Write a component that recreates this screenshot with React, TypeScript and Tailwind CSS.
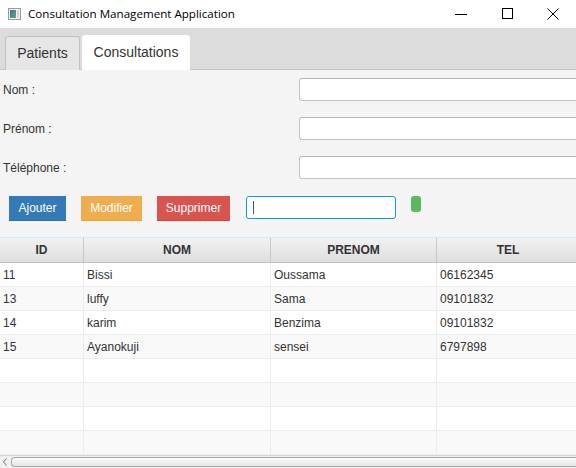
import React from 'react';

const rows = [
  { id: '11', nom: 'Bissi', prenom: 'Oussama', tel: '06162345' },
  { id: '13', nom: 'luffy', prenom: 'Sama', tel: '09101832' },
  { id: '14', nom: 'karim', prenom: 'Benzima', tel: '09101832' },
  { id: '15', nom: 'Ayanokuji', prenom: 'sensei', tel: '6797898' },
  null,
  null,
  null,
  null,
];

const fields = ['Nom :', 'Prénom :', 'Téléphone :'];

const App = () => {
  return (
    <div
      className="w-[576px] h-[468px] overflow-hidden flex flex-col bg-[#f4f4f4] text-[#333]"
      style={{ fontFamily: '"Liberation Sans", Arial, sans-serif' }}
    >
      {/* Title bar */}
      <div className="h-[29px] shrink-0 bg-white flex items-center relative border-b border-[#dcdcdc]">
        <svg className="ml-[8px]" width="13" height="12" viewBox="0 0 13 12">
          <rect x="0.5" y="0.5" width="12" height="11" fill="#f2f2f2" stroke="#9a9a9a" />
          <defs>
            <linearGradient id="ico" x1="0" y1="0" x2="1" y2="1">
              <stop offset="0" stopColor="#3f6fa8" />
              <stop offset="1" stopColor="#5fae6a" />
            </linearGradient>
          </defs>
          <rect x="2" y="2" width="6" height="8" fill="url(#ico)" />
          <rect x="9" y="2" width="2" height="8" fill="#cfd8e0" />
        </svg>
        <span
          className="ml-[7px] text-[11.6px] text-black"
          style={{ fontFamily: '"Open Sans", "Noto Sans", sans-serif' }}
        >
          Consultation Management Application
        </span>
        <div className="absolute left-[455px] top-[14px] w-[12px] h-px bg-black" />
        <div className="absolute left-[502px] top-[8px] w-[11px] h-[11px] border border-black" />
        <svg className="absolute left-[547px] top-[8px]" width="12" height="12" viewBox="0 0 12 12">
          <path d="M0.5 0.5 L11.5 11.5 M11.5 0.5 L0.5 11.5" stroke="#000" strokeWidth="1" />
        </svg>
      </div>

      {/* Tab header */}
      <div className="h-[41px] shrink-0 bg-[#dcdcdc] flex items-end pl-[5px] gap-[2px] border-b border-[#c6c6c6]">
        <div className="w-[75px] h-[34px] mb-[-1px] bg-[#e6e6e6] border border-[#c2c2c2] border-b-0 rounded-t-[3px] flex items-center justify-center text-[14px] text-[#333]">
          Patients
        </div>
        <div className="w-[108px] h-[35px] mb-[-1px] bg-white rounded-t-[3px] flex items-center justify-center text-[14px] text-[#333]">
          Consultations
        </div>
      </div>

      {/* Form */}
      <div className="shrink-0 flex flex-col pt-[8px] gap-[16px]">
        {fields.map((label) => (
          <div key={label} className="flex items-center h-[23px]">
            <span className="w-[299px] pl-[3px] text-[12px] text-[#333]">{label}</span>
            <div className="flex-1 h-[23px] bg-white border border-[#c4c4c4] border-t-[#b5b5b5] border-r-0 rounded-l-[3px]" />
          </div>
        ))}
      </div>

      <div className="shrink-0 flex items-start mt-[17px] pl-[9px] h-[25px]">
        <div className="w-[57px] h-[25px] bg-[#337ab7] border-b border-[#2e6da4] flex items-center justify-center text-[12px] text-white">
          Ajouter
        </div>
        <div className="ml-[15px] w-[61px] h-[25px] bg-[#f0ad4e] border-b border-[#eea236] flex items-center justify-center text-[12px] text-white">
          Modifier
        </div>
        <div className="ml-[15px] w-[73px] h-[25px] bg-[#d9534f] border-b border-[#d43f3a] flex items-center justify-center text-[12px] text-white">
          Supprimer
        </div>
        <div className="ml-[16px] w-[150px] h-[23px] bg-white border-[1.5px] border-[#0a9ed6] rounded-[3px] flex items-center pl-[6px]">
          <div className="w-px h-[13px] bg-[#555]" />
        </div>
        <div className="ml-[15px] w-[10px] h-[16px] bg-[#5cb85c] rounded-[3px]" />
      </div>

      {/* Table */}
      <div className="mt-[16px] flex-1 flex flex-col border-t border-[#d3ebf7] bg-white overflow-hidden">
        <div className="w-[580px] h-[25px] shrink-0 grid grid-cols-[84px_187px_166px_143px] bg-gradient-to-b from-[#f2f2f2] to-[#dedede] border-b border-[#c2c2c2]">
          {['ID', 'NOM', 'PRENOM', 'TEL'].map((h) => (
            <div
              key={h}
              className="flex items-center justify-center text-[12px] font-bold text-[#333] border-r border-[#c8c8c8]"
            >
              {h}
            </div>
          ))}
        </div>
        {rows.map((r, i) => (
          <div
            key={i}
            className={`w-[580px] h-[24px] shrink-0 grid grid-cols-[84px_187px_166px_143px] border-b border-[#eeeeee] ${
              i % 2 === 0 ? 'bg-white' : 'bg-[#f9f9f9]'
            }`}
          >
            {[r?.id, r?.nom, r?.prenom, r?.tel].map((c, j) => (
              <div key={j} className="flex items-center pl-[3px] text-[12px] text-[#333] border-r border-[#ececec]">
                {c ?? ''}
              </div>
            ))}
          </div>
        ))}
      </div>

      {/* Horizontal scrollbar */}
      <div className="h-[13px] shrink-0 bg-[#f0f0f0] border-t border-[#d6d6d6] flex items-center">
        <svg className="ml-[2px]" width="6" height="8" viewBox="0 0 6 8">
          <path d="M4.5 0.5 L1.5 4 L4.5 7.5" fill="none" stroke="#777" strokeWidth="1" />
        </svg>
        <div className="ml-[3px] flex-1 h-[10px] rounded-l-[4px] bg-gradient-to-b from-[#fbfbfb] to-[#e6e6e6] border border-[#a8a8a8] border-r-0" />
      </div>
    </div>
  );
};

export default App;
